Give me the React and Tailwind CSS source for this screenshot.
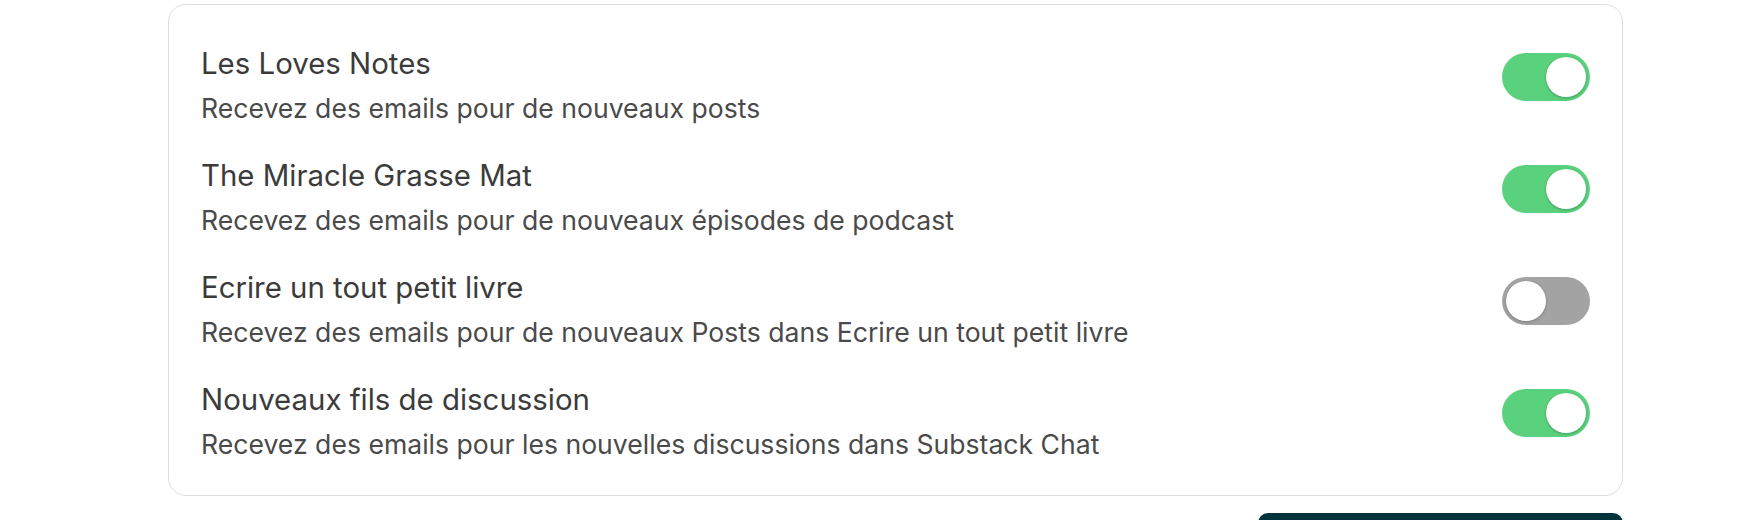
import React, { useState } from "react";

const rows = [
  { title: "Les Loves Notes", desc: "Recevez des emails pour de nouveaux posts", on: true },
  { title: "The Miracle Grasse Mat", desc: "Recevez des emails pour de nouveaux épisodes de podcast", on: true },
  { title: "Ecrire un tout petit livre", desc: "Recevez des emails pour de nouveaux Posts dans Ecrire un tout petit livre", on: false },
  { title: "Nouveaux fils de discussion", desc: "Recevez des emails pour les nouvelles discussions dans Substack Chat", on: true },
];

function Toggle({ on, onClick }) {
  return (
    <button
      onClick={onClick}
      className={
        "mt-[9px] shrink-0 w-[88px] h-[48px] rounded-full p-[4px] flex items-center " +
        (on ? "bg-[#5ad17d] justify-end" : "bg-[#a3a3a3] justify-start")
      }
    >
      <span className="block w-[40px] h-[40px] rounded-full bg-white shadow-[0_1px_3px_rgba(0,0,0,0.25)]" />
    </button>
  );
}

function Row({ row, onToggle }) {
  return (
    <div className="flex justify-between items-start">
      <div className="flex flex-col">
        <h3 className="text-[29.4px] leading-[40px] text-[#3b3b3b]">{row.title}</h3>
        <p className="mt-1 text-[26.6px] leading-[40px] text-[#4a4a4a]">{row.desc}</p>
      </div>
      <Toggle on={row.on} onClick={onToggle} />
    </div>
  );
}

export default function App() {
  const [items, setItems] = useState(rows);

  const flip = (i) =>
    setItems(items.map((r, j) => (j === i ? { ...r, on: !r.on } : r)));

  return (
    <div className="w-full bg-white font-['Inter',sans-serif] pt-[4px]">
      <div className="ml-[168px] w-[1455px]">
        <div className="border border-[#dedede] rounded-[18px] px-8 pt-[39px] pb-[31px] flex flex-col gap-[28px]">
          {items.map((row, i) => (
            <Row key={row.title} row={row} onToggle={() => flip(i)} />
          ))}
        </div>
        <div className="flex justify-end mt-[17px]">
          <button aria-label="Enregistrer" className="w-[365px] h-[56px] rounded-[10px] bg-[#04333b]" />
        </div>
      </div>
    </div>
  );
}
